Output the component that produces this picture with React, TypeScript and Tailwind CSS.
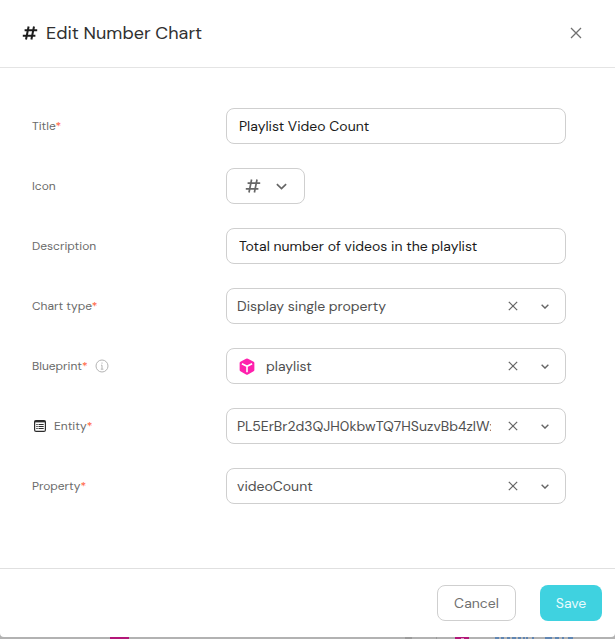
import type { ReactNode } from 'react';

function HashIcon({ className }: { className: string }) {
  return (
    <svg viewBox="0 0 16 16" className={className} fill="none" stroke="currentColor" aria-hidden="true">
      <path d="M6.6 1.5 4 14.5M12 1.5 9.4 14.5M2.6 5.2h12.6M.8 10.8h12.6" />
    </svg>
  );
}

function CloseIcon({ className }: { className: string }) {
  return (
    <svg viewBox="0 0 12 12" className={className} fill="none" stroke="currentColor" aria-hidden="true">
      <path d="m1 1 10 10M11 1 1 11" />
    </svg>
  );
}

function ChevronIcon({ className }: { className: string }) {
  return (
    <svg viewBox="0 0 10 6" className={className} fill="none" stroke="currentColor" aria-hidden="true">
      <path d="m.8.8 4.2 4.2L9.2.8" />
    </svg>
  );
}

function CubeIcon() {
  return (
    <svg viewBox="0 0 16 18" className="ml-0.5 h-[17px] w-4 shrink-0" aria-hidden="true">
      <path
        d="M7 .7a2 2 0 0 1 2 0l6 3.3a1.6 1.6 0 0 1 .8 1.4v7.2a1.6 1.6 0 0 1-.8 1.4l-6 3.4a2 2 0 0 1-2 0l-6-3.4a1.6 1.6 0 0 1-.8-1.4V5.4A1.6 1.6 0 0 1 1 4Z"
        fill="#ff20ad"
      />
      <path d="M2.6 6 8 8.800l5.400-2.800M8 8.800v6.200" fill="none" stroke="white" strokeWidth="1.700" />
    </svg>
  );
}

function InfoIcon() {
  return (
    <svg viewBox="0 0 14 14" className="ml-[7px] h-[14px] w-[14px] text-[#b4b4b4]" fill="none" stroke="currentColor" aria-hidden="true">
      <circle cx="7" cy="7" r="6" />
      <path d="M6 6.200h1v3.800M5.800 10.200h2.600M7 3.500v1.200" />
    </svg>
  );
}

function ListIcon() {
  return (
    <svg viewBox="0 0 12 12" className="mr-2 ml-0.5 h-3 w-3 text-[#2c2c2c]" fill="none" stroke="currentColor" aria-hidden="true">
      <rect x=".6" y=".6" width="10.8" height="10.8" rx="1.5" strokeWidth="1.2" />
      <path d="M.6 1.5h10.8" strokeWidth="1.800" />
      <path d="M2.300 4.500h1.400M2.300 6.500h1.400M2.300 8.500h1.400M4.500 4.500h5.200M4.500 6.500h5.200M4.500 8.500h5.200" />
    </svg>
  );
}

type RowProps = {
  id: string;
  label: string;
  required?: boolean;
  before?: ReactNode;
  after?: ReactNode;
  children: ReactNode;
};

function Row({ id, label, required, before, after, children }: RowProps) {
  return (
    <div className="flex h-9 items-center">
      <div className="flex w-[194px] shrink-0 items-center text-xs text-[#6a6a6a]">
        {before}
        <label htmlFor={id}>
          {label}
          {required && <span className="text-[#ff5a36]">*</span>}
        </label>
        {after}
      </div>
      <div className="min-w-0 flex-1">{children}</div>
    </div>
  );
}

function TextField({ id, value }: { id: string; value: string }) {
  return (
    <input
      id={id}
      defaultValue={value}
      className="block h-9 w-full rounded-lg border border-[#cfcfcf] px-3 text-sm text-[#1b1b1b]"
    />
  );
}

function SelectField({ id, value, icon }: { id: string; value: string; icon?: ReactNode }) {
  return (
    <div className="flex h-9 items-center rounded-lg border border-[#cfcfcf] pr-4 pl-[10px] text-[#505050]">
      {icon}
      <select
        id={id}
        defaultValue={value}
        className={`h-8 min-w-0 flex-1 appearance-none bg-transparent text-sm ${icon ? 'ml-[11px]' : ''}`}
      >
        <option>{value}</option>
      </select>
      <button type="button" aria-label="Clear selection" className="ml-[15px] flex h-6 w-[14px] items-center justify-center text-[#666666]">
        <CloseIcon className="h-[10px] w-[10px] stroke-[1.5]" />
      </button>
      <ChevronIcon className="ml-[21px] h-[5px] w-2 stroke-[1.7] text-[#666666]" />
    </div>
  );
}

export default function App() {
  return (
    <div className="overflow-hidden bg-[#b2b2b2] font-['DM_Sans',Inter,sans-serif]">
      <section className="rounded-b bg-white" role="dialog" aria-labelledby="dialog-title">
        <header className="flex h-[68px] items-center border-b border-[#e4e4e4] pr-[33px] pb-px pl-[22px]">
          <HashIcon className="h-4 w-4 stroke-2 text-[#1d1d1d]" />
          <h1 id="dialog-title" className="ml-2 flex-1 text-lg leading-6 text-[#303030]">Edit Number Chart</h1>
          <button type="button" aria-label="Close" className="text-[#707070]">
            <CloseIcon className="h-3 w-3 stroke-[1.3]" />
          </button>
        </header>

        <form className="flex flex-col gap-6 pt-10 pr-[49px] pb-16 pl-8">
          <Row id="title" label="Title" required>
            <TextField id="title" value="Playlist Video Count" />
          </Row>
          <Row id="icon" label="Icon">
            <button
              id="icon"
              type="button"
              className="flex h-9 w-[79px] items-center justify-center gap-[15px] rounded-lg border border-[#cfcfcf] text-[#666666]"
            >
              <HashIcon className="h-4 w-4 stroke-[1.7]" />
              <ChevronIcon className="h-[7px] w-[11px] stroke-[1.5]" />
            </button>
          </Row>
          <Row id="description" label="Description">
            <TextField id="description" value="Total number of videos in the playlist" />
          </Row>
          <Row id="chart-type" label="Chart type" required>
            <SelectField id="chart-type" value="Display single property" />
          </Row>
          <Row id="blueprint" label="Blueprint" required after={<InfoIcon />}>
            <SelectField id="blueprint" value="playlist" icon={<CubeIcon />} />
          </Row>
          <Row id="entity" label="Entity" required before={<ListIcon />}>
            <SelectField id="entity" value="PL5ErBr2d3QJH0kbwTQ7HSuzvBb4zlW:" />
          </Row>
          <Row id="property" label="Property" required>
            <SelectField id="property" value="videoCount" />
          </Row>
        </form>

        <footer className="flex justify-end gap-6 border-t border-[#e0e0e0] py-4 pr-[13px]">
          <button type="button" className="h-9 w-[79px] rounded-lg border border-[#cfcfcf] text-sm text-[#707070]">
            Cancel
          </button>
          <button type="button" className="h-9 w-[62px] rounded-lg bg-[#3fd2e0] text-sm text-[#e8fbfd]">
            Save
          </button>
        </footer>
      </section>

      <svg viewBox="0 0 615 2" className="block h-0.5 w-full" preserveAspectRatio="none" aria-hidden="true">
        <path d="M110 0h19v2h-19zM455 0h14v2h-14z" fill="#b21778" />
        <path d="M405 0h7v2h-7zM436 0h1v2h-1z" fill="#9c9c9c" />
        <path d="M461 1h3v1h-3z" fill="#dca0c4" />
        <path
          d="M495 1h4M501 1h3M507 1h3M512 1h4M518 1h3M523 1h2M527 0v2M533 0v2M545 1h7M555 1h4M562 1h2M568 1h5"
          stroke="#4678b4"
          strokeWidth="1.5"
        />
      </svg>
    </div>
  );
}
